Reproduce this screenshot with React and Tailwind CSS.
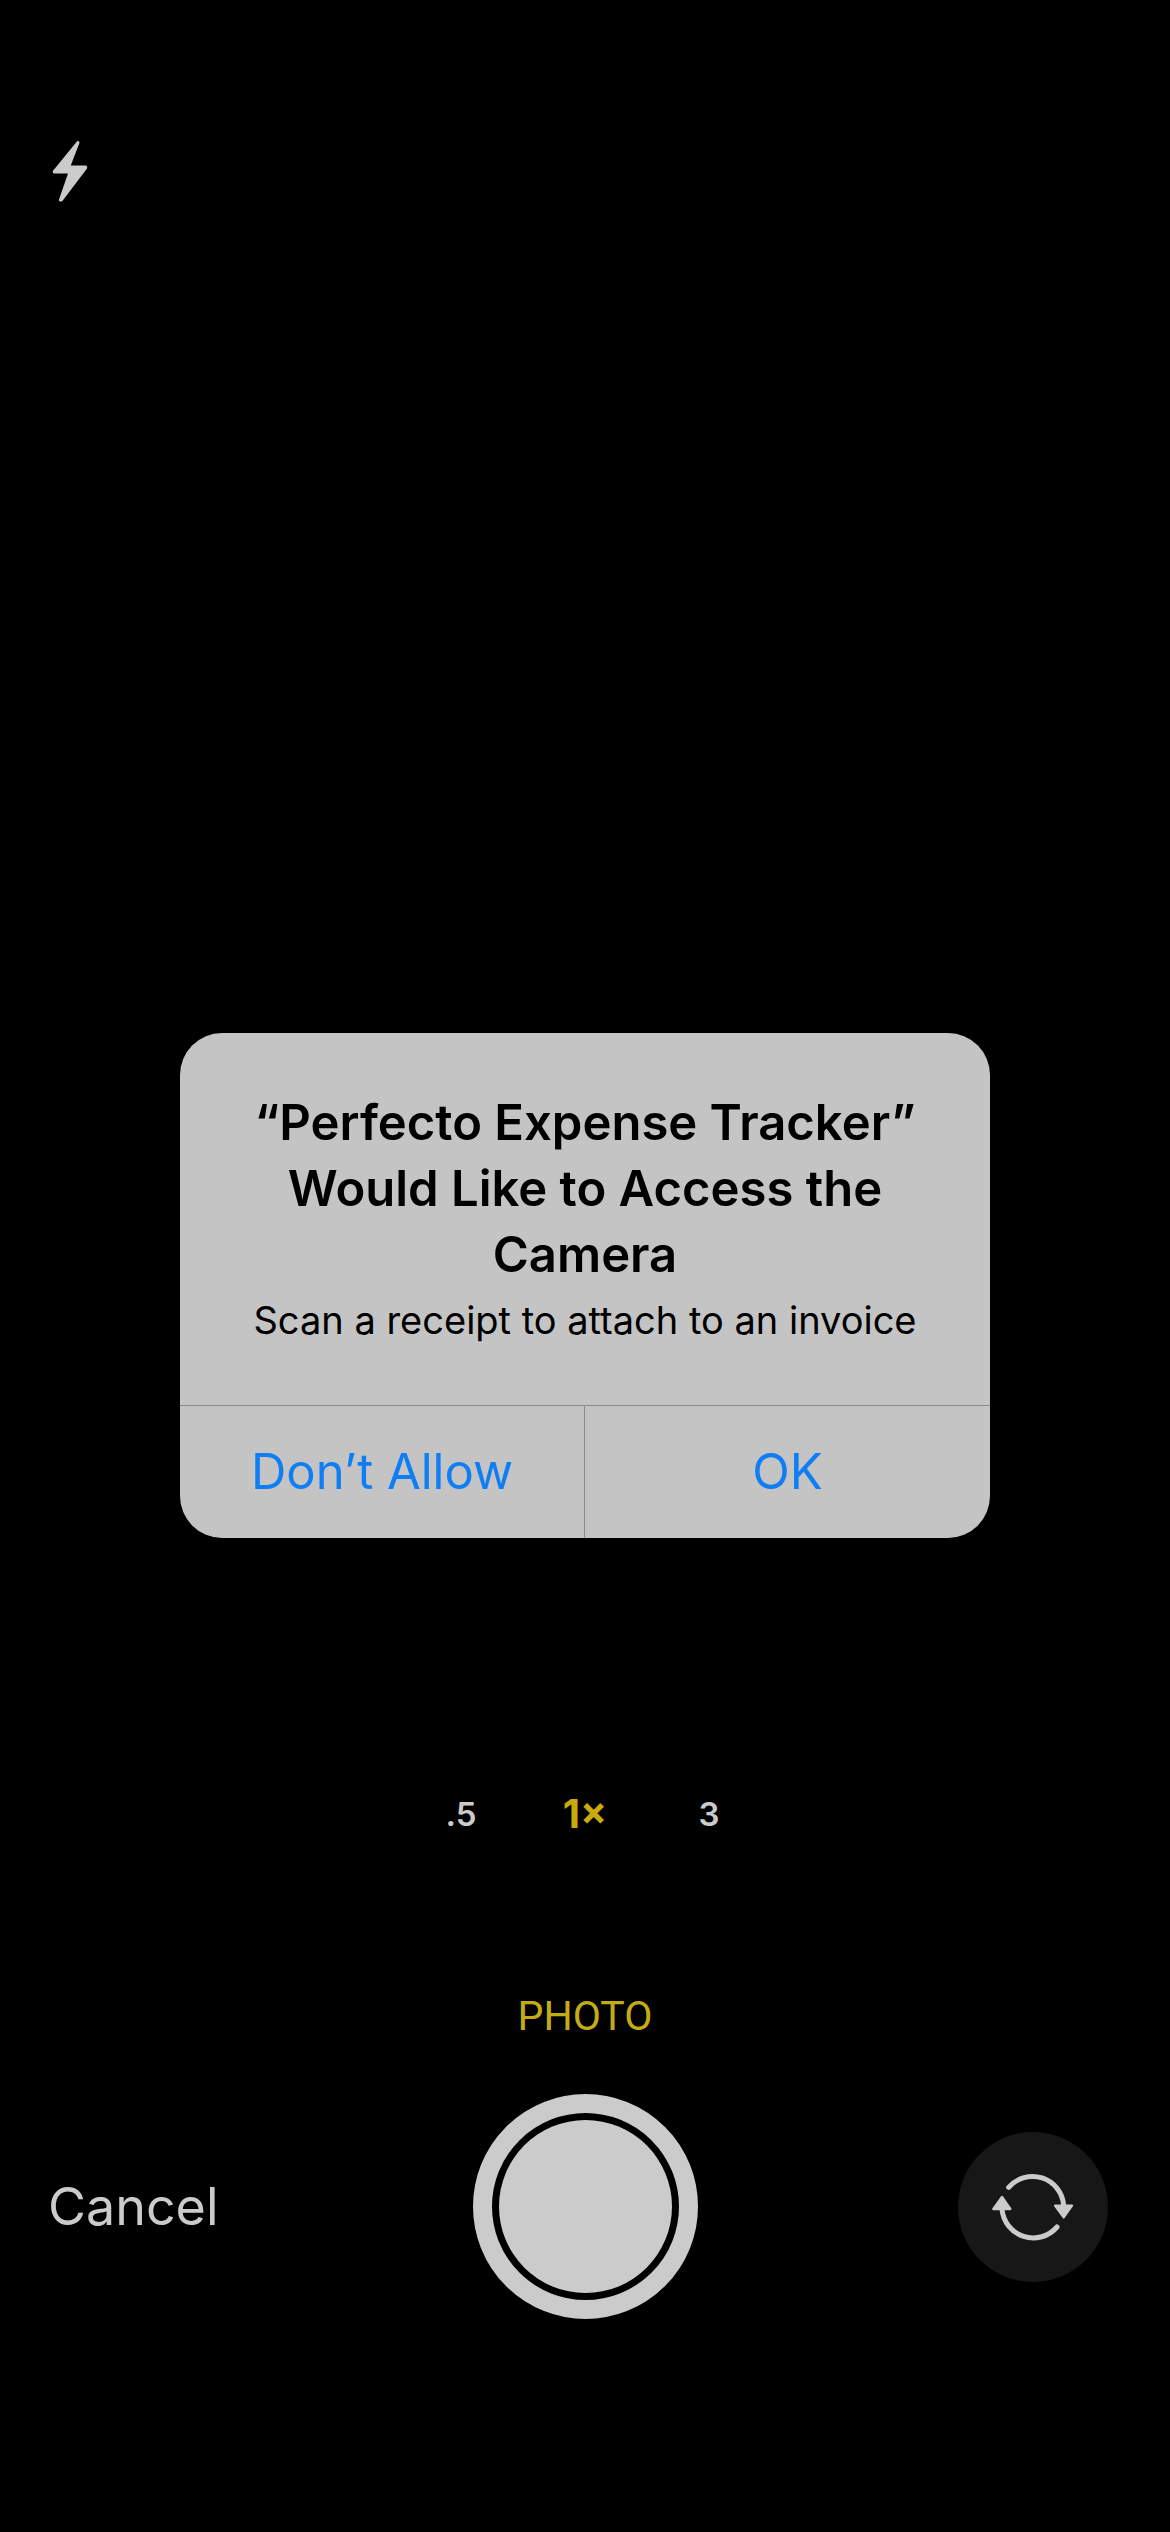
import React from "react";

const zoomLevels = [
  { label: ".5", active: false },
  { label: "1×", active: true },
  { label: "3", active: false },
];

function BoltIcon() {
  return (
    <svg viewBox="66 57 110 190" className="h-16 w-9" fill="#cbcbcb" stroke="#cbcbcb" strokeWidth="6" strokeLinejoin="round" aria-hidden="true">
      <path d="M145 63 L72 152 Q69 157 74 157 L119 157 L90 241 Q92 244 96 241 L170 143 Q172 138 168 138 L119 138 L147 65 Z" />
    </svg>
  );
}

function FlipIcon() {
  return (
    <svg viewBox="143 182 270 216" className="h-[72px] w-[90px]" fill="none" stroke="#cbcbcb" aria-hidden="true">
      <g strokeWidth="15" strokeLinecap="round">
        <path d="M205 231 A94 94 0 0 1 370 285" />
        <path d="M350 350 A94 94 0 0 1 185 297" />
      </g>
      <g fill="#cbcbcb" strokeWidth="7" strokeLinejoin="round">
        <path d="M344 286 H395 L370 321 Z" />
        <path d="M159 296 H210 L185 260 Z" />
      </g>
    </svg>
  );
}

function PermissionDialog() {
  return (
    <div className="absolute inset-0 flex items-center justify-center pt-[38px]">
      <div
        role="alertdialog"
        aria-modal="true"
        aria-labelledby="dialog-title"
        aria-describedby="dialog-text"
        className="w-[810px] max-w-full overflow-hidden rounded-[42px] bg-[#c4c4c4] text-center"
      >
        <div className="px-12 pt-[57px] pb-[61px] text-black">
          <h1 id="dialog-title" className="text-[49px] leading-[66px] font-semibold">
            “Perfecto Expense Tracker” Would Like to Access the Camera
          </h1>
          <p id="dialog-text" className="mt-2 text-[38px] leading-[48px]">
            Scan a receipt to attach to an invoice
          </p>
        </div>
        <div className="grid grid-cols-2 border-t border-[#8c8c8c] text-[49px] leading-[66px] text-[#0f7ef5]">
          <button type="button" className="border-r border-[#8c8c8c] py-[33px]">Don’t Allow</button>
          <button type="button" className="py-[33px]">OK</button>
        </div>
      </div>
    </div>
  );
}

export default function App() {
  return (
    <main className="relative flex min-h-screen flex-col bg-black font-['Inter',sans-serif] text-[#cbcbcb]">
      <header className="px-[52px] pt-[139px]">
        <button type="button" aria-label="Flash" className="block">
          <BoltIcon />
        </button>
      </header>

      <footer className="mt-auto pb-[213px]">
        <div className="flex items-center justify-center">
          {zoomLevels.map(({ label, active }) => (
            <button
              key={label}
              type="button"
              aria-pressed={active}
              className={
                active
                  ? "w-[124px] text-[40px] leading-[48px] font-bold text-[#c9a90c]"
                  : "w-[124px] text-[33px] leading-[48px] font-semibold"
              }
            >
              {label}
            </button>
          ))}
        </div>

        <p className="mt-[154px] text-center font-['Roboto',sans-serif] text-[41px] leading-[48px] text-[#c4ad14]">PHOTO</p>

        <div className="mt-[54px] grid grid-cols-3 items-center px-12">
          <button type="button" className="justify-self-start text-[52px] leading-[66px]">Cancel</button>
          <button
            type="button"
            aria-label="Take photo"
            className="flex size-[225px] items-center justify-center justify-self-center rounded-full border-[19px] border-[#cbcbcb]"
          >
            <span className="size-[173px] rounded-full bg-[#cbcbcb]" />
          </button>
          <button
            type="button"
            aria-label="Switch camera"
            className="mr-3.5 flex size-[150px] items-center justify-center justify-self-end rounded-full bg-[#171717]"
          >
            <FlipIcon />
          </button>
        </div>
      </footer>

      <PermissionDialog />
    </main>
  );
}
